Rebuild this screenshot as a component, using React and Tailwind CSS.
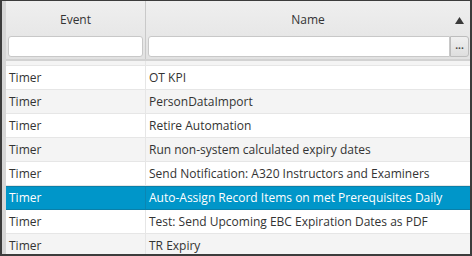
import React from 'react';

const rows = [
  { event: 'Timer', name: 'Expiry Check' },
  { event: 'Timer', name: 'OT KPI' },
  { event: 'Timer', name: 'PersonDataImport' },
  { event: 'Timer', name: 'Retire Automation' },
  { event: 'Timer', name: 'Run non-system calculated expiry dates' },
  { event: 'Timer', name: 'Send Notification: A320 Instructors and Examiners' },
  { event: 'Timer', name: 'Auto-Assign Record Items on met Prerequisites Daily', selected: true },
  { event: 'Timer', name: 'Test: Send Upcoming EBC Expiration Dates as PDF' },
  { event: 'Timer', name: 'TR Expiry' },
];

export default function App() {
  return (
    <div className="w-[472px] h-[256px] overflow-hidden bg-[#3c3c3c] pt-px pl-[2px] pr-[2px] pb-[2px] text-[12px] text-[#333]" style={{ fontFamily: '"Open Sans", "Liberation Sans", sans-serif' }}>
      <div className="flex h-full bg-white">
        <div className="w-[4px] shrink-0 bg-[#d6d6d6]" />
        <div className="flex-1 flex flex-col min-w-0">
          {/* header */}
          <div className="flex h-[60px] shrink-0 bg-gradient-to-b from-[#efefef] to-[#e2e2e2] border-b-2 border-[#d2d2d2]">
            <div className="w-[140px] shrink-0 flex flex-col border-r border-[#c9c9c9]">
              <div className="h-[35px] flex items-center justify-center pt-[2px]">Event</div>
              <div className="px-[2px]">
                <div className="h-[21px] bg-white border border-[#c8c8c8] rounded-[3px]" />
              </div>
            </div>
            <div className="flex-1 flex flex-col min-w-0">
              <div className="h-[35px] flex items-center justify-center relative pt-[2px]">
                Name
                <svg className="absolute right-[6px] top-[16px]" width="9" height="7" viewBox="0 0 9 7">
                  <polygon points="4.5,0 9,7 0,7" fill="#3a3a3a" />
                </svg>
              </div>
              <div className="flex pl-[2px] pr-[1px]">
                <div className="flex-1 h-[21px] bg-white border border-[#c8c8c8] rounded-l-[3px]" />
                <div className="w-[19px] h-[21px] bg-gradient-to-b from-[#f0f0f0] to-[#dedede] border border-[#bdbdbd] rounded-r-[3px] flex items-center justify-center text-[#444] font-bold leading-none pb-[3px] text-[10px]">...</div>
              </div>
            </div>
          </div>
          {/* body */}
          <div className="flex-1 overflow-hidden">
            <div className="-mt-[19px]">
              {rows.map((r, i) => (
                <div
                  key={i}
                  className={
                    'flex h-[24px] items-center border-b ' +
                    (r.selected
                      ? 'bg-[#0096c9] text-white border-[#0a7fa8] border-t border-t-[#0a7fa8]'
                      : i % 2 === 0
                      ? 'bg-[#f4f4f4] border-[#e6e6e6]'
                      : 'bg-white border-[#e6e6e6]')
                  }
                >
                  <div className={'w-[140px] shrink-0 h-full flex items-center pl-[3px] border-r ' + (r.selected ? 'border-[#0a86b3]' : 'border-[#e6e6e6]')}>{r.event}</div>
                  <div className="flex-1 pl-[3px] whitespace-nowrap">{r.name}</div>
                </div>
              ))}
            </div>
          </div>
        </div>
      </div>
    </div>
  );
}
